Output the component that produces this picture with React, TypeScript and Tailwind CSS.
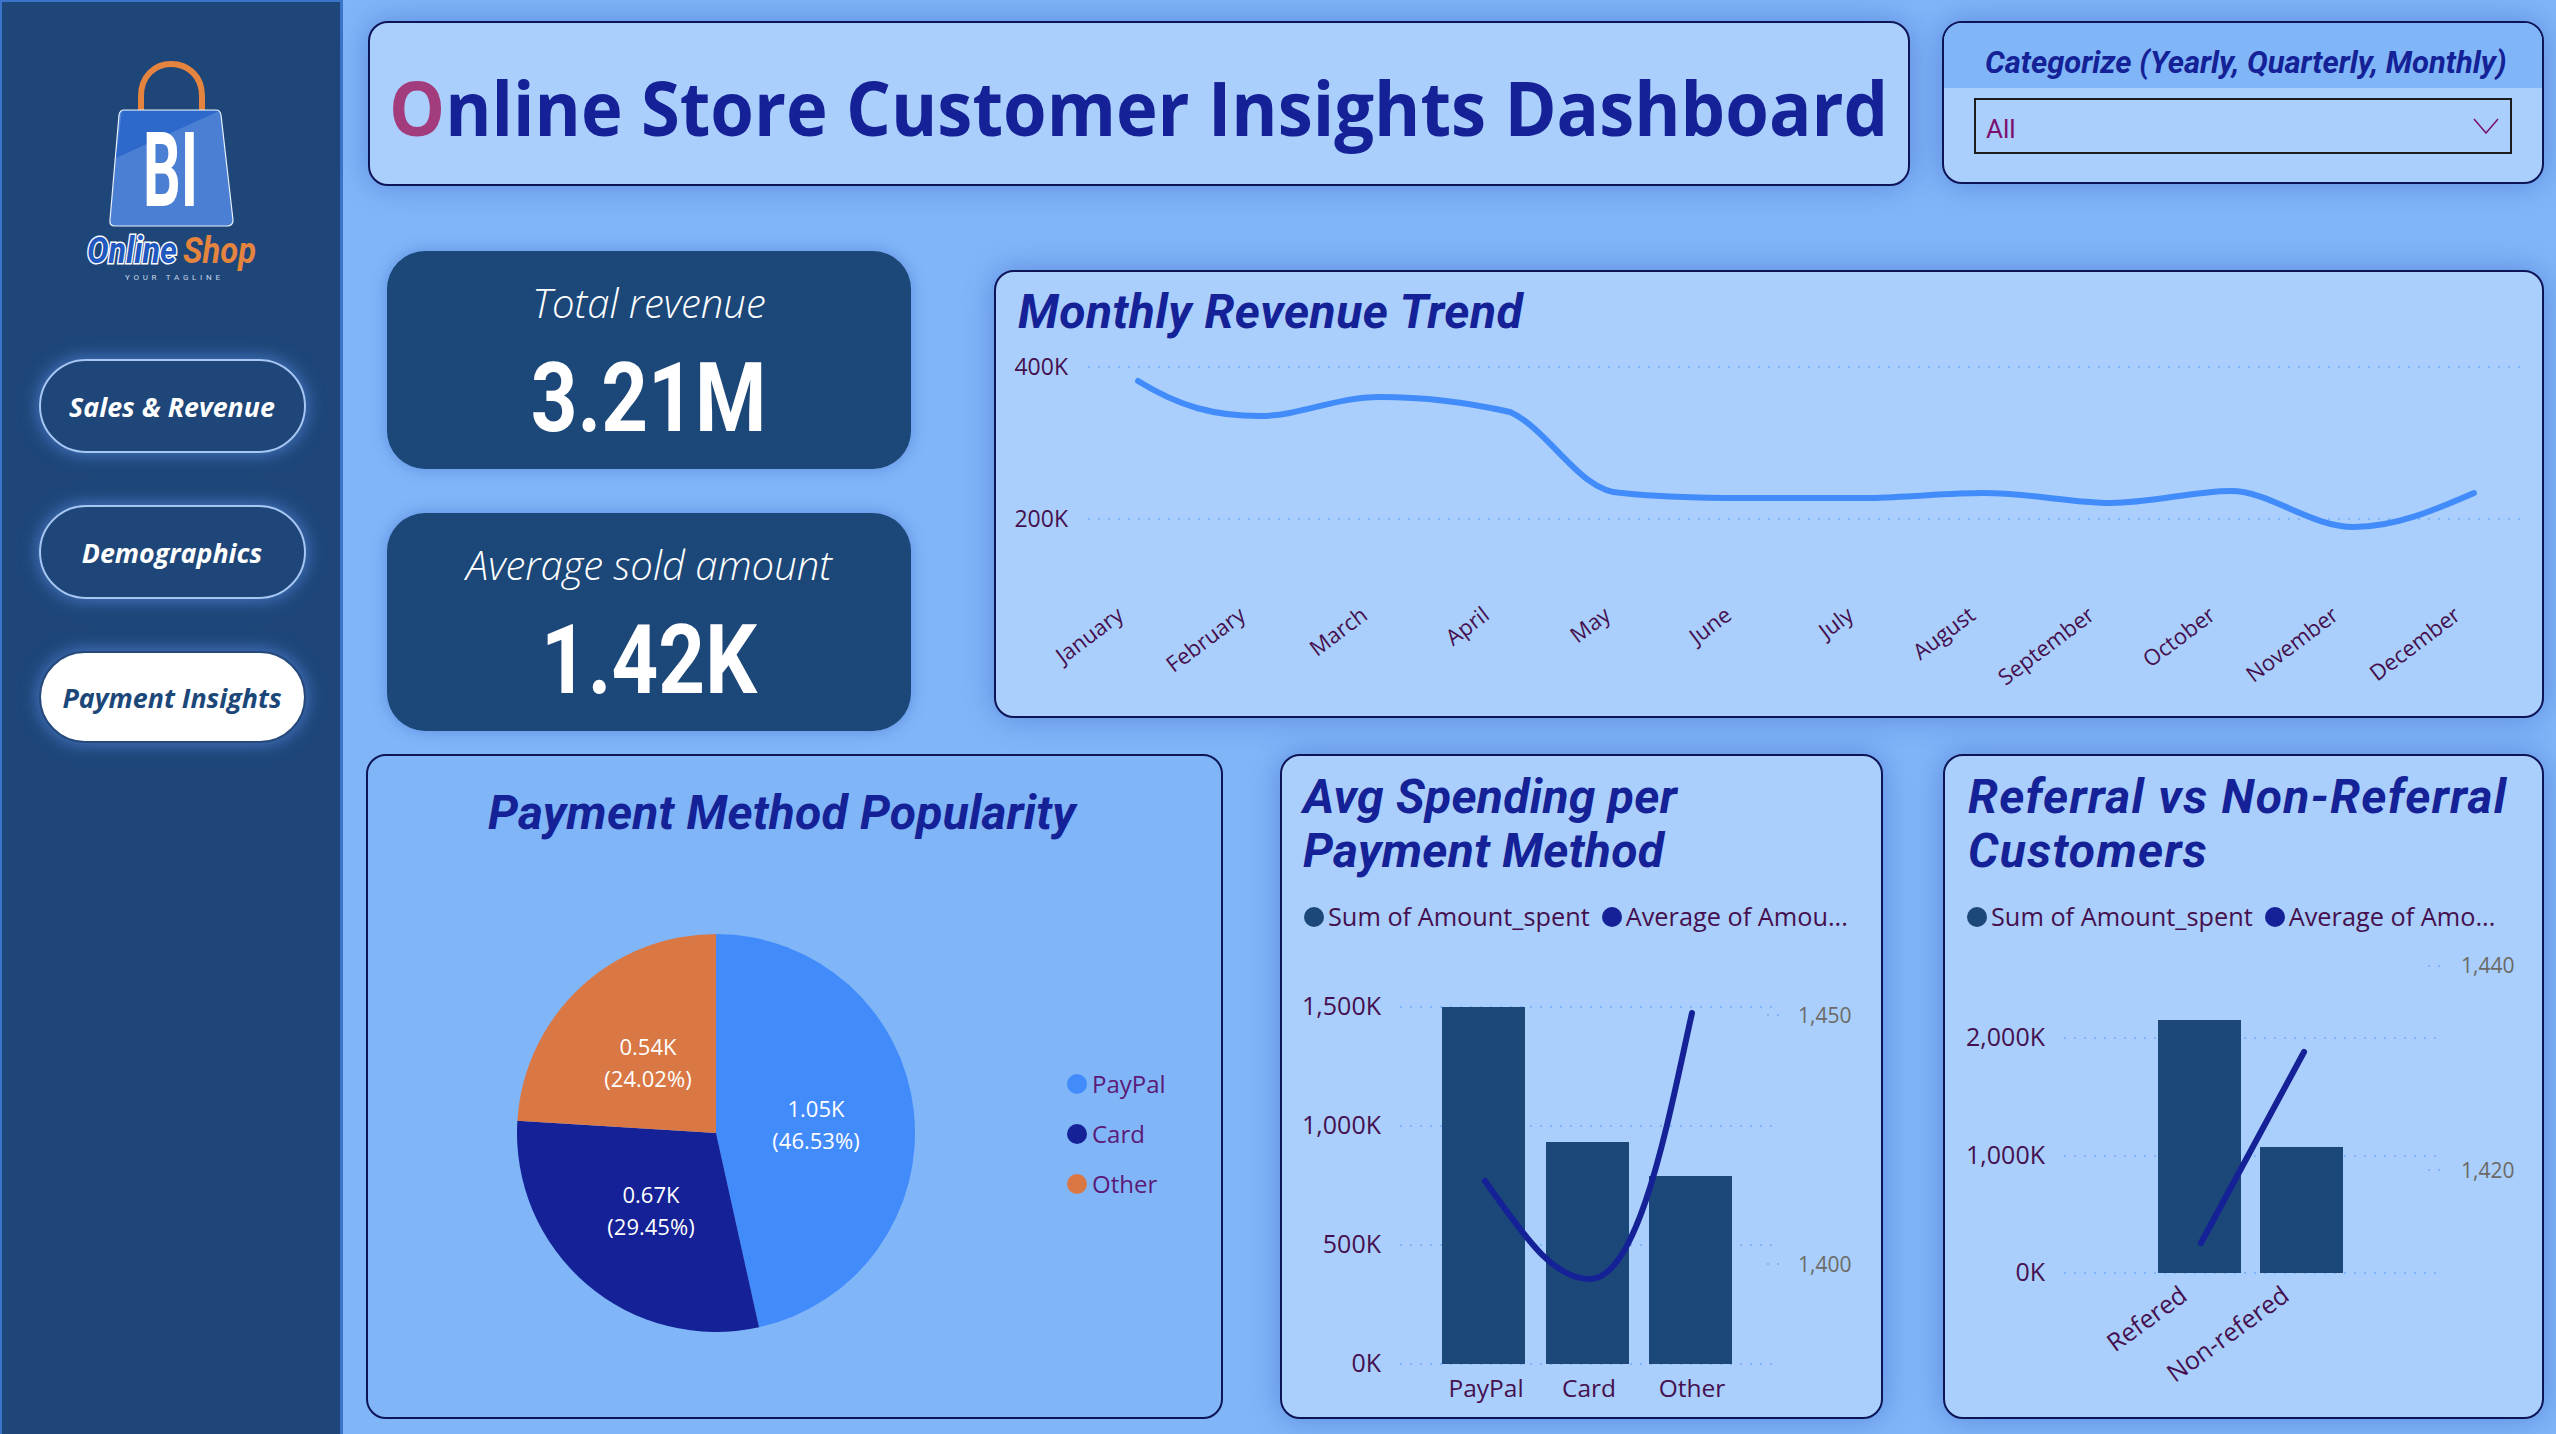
import React from "react";

const DIN = "font-['Roboto'] font-bold italic";
const axis = "#45104f";
const grid = "#7fb5f8";

function Pie() {
  const cx = 716, cy = 1132, r = 199;
  const vals = [
    { p: 46.53, c: "#428bfa" },
    { p: 29.45, c: "#152196" },
    { p: 24.02, c: "#d97745" },
  ];
  let acc = 0;
  const paths = vals.map((v) => {
    const a0 = (acc / 100) * Math.PI * 2;
    acc += v.p;
    const a1 = (acc / 100) * Math.PI * 2;
    const large = v.p > 50 ? 1 : 0;
    const d = `M${cx} ${cy}L${cx + r * Math.sin(a0)} ${cy - r * Math.cos(a0)}A${r} ${r} 0 ${large} 1 ${cx + r * Math.sin(a1)} ${cy - r * Math.cos(a1)}Z`;
    return <path key={v.c} d={d} fill={v.c} />;
  });
  const labels = [
    [816, 1107, "1.05K"], [816, 1139, "(46.53%)"],
    [651, 1193, "0.67K"], [651, 1225, "(29.45%)"],
    [648, 1045, "0.54K"], [648, 1077, "(24.02%)"],
  ] as const;
  const legend = [["PayPal", "#428bfa", 1083], ["Card", "#152196", 1133], ["Other", "#d97745", 1183]] as const;
  return (
    <svg viewBox="368 857 852 559" width={852} height={559} className="block">
      {paths}
      {labels.map(([x, y, t]) => (
        <text key={t} x={x} y={y} textAnchor="middle" dominantBaseline="central" fill="#fff" fontSize={22}>{t}</text>
      ))}
      {legend.map(([t, c, y]) => (
        <g key={t}>
          <circle cx={1077} cy={y} r={10} fill={c} />
          <text x={1092} y={y - 1} dominantBaseline="central" fill="#5b1a78" fontSize={24}>{t}</text>
        </g>
      ))}
    </svg>
  );
}

function Dots({ x1, x2, y }: { x1: number; x2: number; y: number }) {
  return <line x1={x1} x2={x2} y1={y} y2={y} stroke={grid} strokeWidth={2} strokeDasharray="2 8" />;
}

function Monthly() {
  const names = ["January", "February", "March", "April", "May", "June", "July", "August", "September", "October", "November", "December"];
  const ends = [1125, 1247, 1369, 1491, 1612, 1733, 1855, 1977, 2096, 2217, 2340, 2462];
  const d =
    "M1138 381C1180 407 1215 416 1260 416C1300 416 1335 397 1380 397C1425 397 1470 403 1510 412C1550 430 1580 493 1622 493C1660 497 1700 498 1742 498C1790 498 1830 498 1870 498C1910 497 1950 493 1983 493C2030 493 2070 503 2111 503C2150 503 2195 491 2231 491C2270 491 2310 527 2354 527C2395 527 2435 510 2474 493";
  return (
    <svg viewBox="996 345 1546 372" width={1546} height={372} className="block">
      <Dots x1={1088} x2={2520} y={367} />
      <Dots x1={1088} x2={2520} y={519} />
      <text x={1068} y={366} textAnchor="end" dominantBaseline="central" fill={axis} fontSize={23}>400K</text>
      <text x={1068} y={518} textAnchor="end" dominantBaseline="central" fill={axis} fontSize={23}>200K</text>
      <path d={d} fill="none" stroke="#428bfa" strokeWidth={6} strokeLinecap="round" />
      {names.map((n, i) => (
        <text key={n} x={ends[i]} y={618} textAnchor="end" fill={axis} fontSize={22} transform={`rotate(-37 ${ends[i]} 618)`}>{n}</text>
      ))}
    </svg>
  );
}

function Legend({ second }: { second: string }) {
  return (
    <div className="flex items-center h-[28px] text-[25.3px] text-[#45104f] whitespace-nowrap">
      <span className="w-[20px] h-[20px] rounded-full bg-[#1c4779] mr-[4px]" />
      <span>Sum of Amount_spent</span>
      <span className="w-[20px] h-[20px] rounded-full bg-[#152196] ml-[12px] mr-[4px]" />
      <span>{second}</span>
    </div>
  );
}

function AvgChart() {
  const lines = [[1006, "1,500K"], [1125, "1,000K"], [1244, "500K"], [1363, "0K"]] as const;
  return (
    <svg viewBox="1282 930 599 486" width={599} height={486} className="block">
      {lines.map(([y, t]) => (
        <g key={t}>
          <Dots x1={1400} x2={1773} y={y} />
          <text x={1381} y={y - 2} textAnchor="end" dominantBaseline="central" fill={axis} fontSize={25}>{t}</text>
        </g>
      ))}
      <rect x={1442} y={1006} width={83} height={357} fill="#1c4779" />
      <rect x={1546} y={1141} width={83} height={222} fill="#1c4779" />
      <rect x={1649} y={1175} width={83} height={188} fill="#1c4779" />
      <path d="M1485 1180C1520 1228 1550 1278 1590 1278C1640 1278 1670 1110 1692 1012" fill="none" stroke="#152196" strokeWidth={6} strokeLinecap="round" />
      <Dots x1={1767} x2={1780} y={1014} />
      <Dots x1={1767} x2={1780} y={1263} />
      <text x={1798} y={1014} dominantBaseline="central" fill="#6b6a66" fontSize={21}>1,450</text>
      <text x={1798} y={1263} dominantBaseline="central" fill="#6b6a66" fontSize={21}>1,400</text>
      {[["PayPal", 1486], ["Card", 1589], ["Other", 1692]].map(([t, x]) => (
        <text key={t} x={x} y={1386} textAnchor="middle" dominantBaseline="central" fill={axis} fontSize={24.5}>{t}</text>
      ))}
    </svg>
  );
}

function RefChart() {
  const lines = [[1037, "2,000K"], [1155, "1,000K"], [1272, "0K"]] as const;
  return (
    <svg viewBox="1945 930 597 486" width={597} height={486} className="block">
      {lines.map(([y, t]) => (
        <g key={t}>
          <Dots x1={2064} x2={2437} y={y} />
          <text x={2045} y={y - 2} textAnchor="end" dominantBaseline="central" fill={axis} fontSize={25}>{t}</text>
        </g>
      ))}
      <rect x={2158} y={1019} width={83} height={253} fill="#1c4779" />
      <rect x={2260} y={1146} width={83} height={126} fill="#1c4779" />
      <path d="M2201 1242L2304 1051" fill="none" stroke="#152196" strokeWidth={6} strokeLinecap="round" />
      <Dots x1={2428} x2={2441} y={965} />
      <Dots x1={2428} x2={2441} y={1169} />
      <text x={2461} y={964} dominantBaseline="central" fill="#6b6a66" fontSize={21}>1,440</text>
      <text x={2461} y={1169} dominantBaseline="central" fill="#6b6a66" fontSize={21}>1,420</text>
      <text x={2189} y={1298} textAnchor="end" fill={axis} fontSize={25} transform="rotate(-36 2189 1298)">Refered</text>
      <text x={2291} y={1298} textAnchor="end" fill={axis} fontSize={25} transform="rotate(-36 2291 1298)">Non-refered</text>
    </svg>
  );
}

function Logo() {
  return (
    <svg viewBox="70 50 200 240" width={200} height={240} className="block">
      <path d="M141 110V96C141 76 155 64 171 64C188 64 202 76 202 96V110" fill="none" stroke="#e5843f" strokeWidth={6} />
      <path d="M124 110H216Q220 110 221 115L233 220Q233 226 227 226H115Q109 226 110 220L119 115Q120 110 124 110Z" fill="#4a7fd4" stroke="#e8f0fb" strokeWidth={1.2} />
      <path d="M122 111H219L116 158Z" fill="#2d68cb" />
      <text x={143} y={206} fill="#fff" fontSize={103} className="font-['Roboto'] font-bold" textLength={55} lengthAdjust="spacingAndGlyphs">BI</text>
      <text x={87} y={263} fill="#2158c0" stroke="#fff" strokeWidth={3} paintOrder="stroke" fontSize={36} textLength={90} lengthAdjust="spacingAndGlyphs" className="font-['Roboto'] font-bold italic">Online</text>
      <text x={183} y={263} fill="#e5843f" fontSize={36} textLength={73} lengthAdjust="spacingAndGlyphs" className="font-['Roboto'] font-bold italic">Shop</text>
      <text x={125} y={280} fill="#c9d6ea" fontSize={8} textLength={95} className="font-['Roboto']">YOUR TAGLINE</text>
    </svg>
  );
}

function NavPill({ label, active }: { label: string; active?: boolean }) {
  return (
    <div
      className={
        active
          ? "w-[267px] h-[92px] rounded-full flex items-center justify-center bg-white border-2 border-[#26497c] text-[#1c4779] text-[26.8px] font-bold italic shadow-[0_0_18px_rgba(95,145,235,0.75)]"
          : "w-[267px] h-[94px] rounded-full flex items-center justify-center border-2 border-[#a6c6f3] text-white text-[26.8px] font-bold italic shadow-[0_0_18px_rgba(95,145,235,0.75)]"
      }
    >
      <span className="pt-[2px]">{label}</span>
    </div>
  );
}

function Kpi({ label, value }: { label: string; value: string }) {
  return (
    <div className="w-[524px] h-[218px] rounded-[38px] bg-[#1c4779] flex flex-col items-center text-white shadow-[0_0_16px_rgba(50,80,190,0.4)]">
      <div className="mt-[27px] h-[50px] leading-[50px] text-[40px] font-[350] italic">{label}</div>
      <div className="mt-[22px] h-[96px] leading-[96px] text-[96px] font-['Roboto'] font-bold scale-x-[0.85]">{value}</div>
    </div>
  );
}

export default function App() {
  const card = "bg-[#aacffc] border-2 border-[#0d1557] rounded-[20px] shadow-[0_0_30px_rgba(50,80,190,0.45)]";
  return (
    <div className="w-[2556px] h-[1434px] overflow-hidden flex bg-[#80b6f8] font-['Open_Sans',sans-serif]">
      <aside className="w-[343px] h-full shrink-0 bg-[#1e4679] border-l-2 border-t-2 border-r-[3px] border-[#3a75c9] flex flex-col items-center">
        <div className="mt-[48px] self-start ml-[68px]"><Logo /></div>
        <div className="mt-[69px] flex flex-col gap-[52px] ml-[2px]">
          <NavPill label="Sales & Revenue" />
          <NavPill label="Demographics" />
          <NavPill label="Payment Insights" active />
        </div>
      </aside>

      <main className="flex-1 pl-[23px] pr-[12px] pt-[21px] flex flex-col">
        <div className="flex items-start gap-[32px] ml-[2px]">
          <div className={`${card} w-[1542px] h-[165px] flex items-center pl-[19px]`}>
            <h1 className="pt-[6px] text-[76px] leading-none font-bold text-[#152196] whitespace-nowrap origin-left scale-x-[0.928]">
              <span className="text-[#a33c7c]">O</span>nline Store Customer Insights Dashboard
            </h1>
          </div>
          <div className={`${card} w-[602px] h-[163px] overflow-hidden flex flex-col`}>
            <div className={`h-[65px] shrink-0 bg-[#80b6f8] pl-[41px] pt-[16px] flex items-center text-[31px] text-[#152196] whitespace-nowrap ${DIN}`}>
              Categorize (Yearly, Quarterly, Monthly)
            </div>
            <div className="mt-[10px] mx-[30px] h-[56px] border-2 border-[#1c1c1c] flex items-center justify-between pl-[10px] pr-[11px]">
              <span className="pt-[6px] text-[26px] text-[#7a1070] font-['Roboto']">All</span>
              <svg width="26" height="16" viewBox="0 0 26 16" fill="none" stroke="#7a1070" strokeWidth="1.5"><path d="M1 1L13 15L25 1" /></svg>
            </div>
          </div>
        </div>

        <div className="mt-[65px] flex items-start">
          <div className="ml-[21px] flex flex-col gap-[44px]">
            <Kpi label="Total revenue" value="3.21M" />
            <Kpi label="Average sold amount" value="1.42K" />
          </div>
          <div className={`${card} ml-[83px] mt-[19px] w-[1550px] h-[448px] overflow-hidden`}>
            <div className={`h-[73px] pl-[22px] pt-[12px] text-[#152196] text-[48px] leading-[56px] tracking-[0.5px] whitespace-nowrap ${DIN}`}>Monthly Revenue Trend</div>
            <Monthly />
          </div>
        </div>

        <div className="mt-[23px] flex items-start">
          <div className="w-[857px] h-[665px] border-2 border-[#0d1557] rounded-[20px] bg-[#80b6f8] overflow-hidden">
            <div className={`h-[102px] pl-[120px] pt-[29px] text-[#152196] text-[48px] leading-[56px] tracking-[0.2px] whitespace-nowrap ${DIN}`}>Payment Method Popularity</div>
            <Pie />
          </div>
          <div className={`${card} ml-[57px] w-[603px] h-[665px] overflow-hidden`}>
            <div className={`pl-[21px] pt-[14px] text-[#152196] text-[48px] leading-[54px] tracking-[0.3px] ${DIN}`}>Avg Spending per<br />Payment Method</div>
            <div className="pl-[22px] mt-[25px]"><Legend second="Average of Amou..." /></div>
            <AvgChart />
          </div>
          <div className={`${card} ml-[60px] w-[601px] h-[665px] overflow-hidden`}>
            <div className={`pl-[23px] pt-[14px] text-[#152196] text-[48px] leading-[54px] tracking-[1.3px] ${DIN}`}>Referral vs Non-Referral<br />Customers</div>
            <div className="pl-[22px] mt-[25px]"><Legend second="Average of Amo..." /></div>
            <RefChart />
          </div>
        </div>
      </main>
    </div>
  );
}
